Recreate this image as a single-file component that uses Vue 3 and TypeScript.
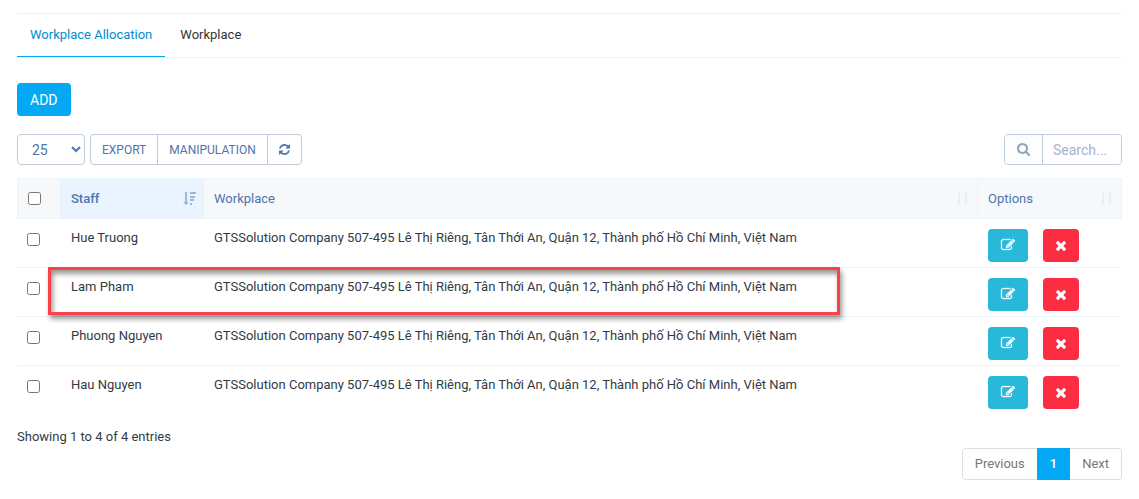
<script setup lang="ts">
import { computed, ref } from 'vue'

interface Allocation {
  id: number
  staff: string
  workplace: string
}

const address =
  'GTSSolution Company 507-495 Lê Thị Riêng, Tân Thới An, Quận 12, Thành phố Hồ Chí Minh, Việt Nam'

const rows = ref<Allocation[]>([
  { id: 1, staff: 'Hue Truong', workplace: address },
  { id: 2, staff: 'Lam Pham', workplace: address },
  { id: 3, staff: 'Phuong Nguyen', workplace: address },
  { id: 4, staff: 'Hau Nguyen', workplace: address },
])

const tabs = ['Workplace Allocation', 'Workplace']
const activeTab = ref(tabs[0])
const pageSize = ref(25)
const search = ref('')
const selected = ref<number[]>([])
const highlightedId = 2

const allSelected = computed({
  get: () => rows.value.length > 0 && selected.value.length === rows.value.length,
  set: (on: boolean) => {
    selected.value = on ? rows.value.map((r) => r.id) : []
  },
})

const visibleRows = computed(() =>
  rows.value.filter((r) => (r.staff + r.workplace).toLowerCase().includes(search.value.toLowerCase())),
)

function removeRow(id: number) {
  rows.value = rows.value.filter((r) => r.id !== id)
}
</script>

<template>
  <main class="page">
    <nav class="tabs">
      <a
        v-for="tab in tabs"
        :key="tab"
        href="#"
        class="tab"
        :class="{ active: tab === activeTab }"
        @click.prevent="activeTab = tab"
      >{{ tab }}</a>
    </nav>

    <button type="button" class="add">ADD</button>

    <div class="toolbar">
      <select v-model="pageSize" class="length" aria-label="Rows per page">
        <option :value="10">10</option>
        <option :value="25">25</option>
        <option :value="50">50</option>
      </select>
      <div class="group">
        <button type="button">EXPORT</button>
        <button type="button">MANIPULATION</button>
        <button type="button" aria-label="Reload">
          <svg class="reload" viewBox="128 128 1536 1536">
            <path d="M1639 1056q0 5-1 7-64 268-268 434.500T892 1664q-146 0-282.500-55T366 1452l-129 129q-19 19-45 19t-45-19-19-45v-448q0-26 19-45t45-19h448q26 0 45 19t19 45-19 45l-137 137q71 66 161 102t187 36q134 0 250-65t186-179q11-17 53-117 8-23 30-23h192q13 0 22.500 9.500t9.500 22.500zM1664 256v448q0 26-19 45t-45 19h-448q-26 0-45-19t-19-45 19-45l138-138Q1097 384 896 384q-134 0-250 65T460 628q-11 17-53 117-8 23-30 23H178q-13 0-22.500-9.500T146 736v-7q65-268 270-434.500T896 128q146 0 284 55.500T1425 340l130-129q19-19 45-19t45 19 19 45z" />
          </svg>
        </button>
      </div>
      <div class="search">
        <label for="search" aria-label="Search">
          <svg viewBox="64 128 1664 1664">
            <path d="M1216 832q0-185-131.500-316.500T768 384 451.500 515.500 320 832t131.500 316.500T768 1280t316.500-131.500T1216 832zm512 832q0 52-38 90t-90 38q-54 0-90-38l-343-342q-179 124-399 124-143 0-273.500-55.500t-225-150-150-225T64 832t55.500-273.500 150-225 225-150T768 128t273.500 55.500 225 150 150 225T1472 832q0 220-124 399l343 343q37 37 37 90z" />
          </svg>
        </label>
        <input id="search" v-model="search" type="text" placeholder="Search..." />
      </div>
    </div>

    <table>
      <colgroup>
        <col class="col-check" />
        <col class="col-staff" />
        <col />
        <col class="col-options" />
      </colgroup>
      <thead>
        <tr>
          <th class="check"><input v-model="allSelected" type="checkbox" aria-label="Select all" /></th>
          <th class="sorted">
            <div class="head">
              Staff
              <svg class="sort" viewBox="0 0 13 13">
                <path d="M2 0h2v10h2L3 13 0 10h2zM7 0h6v2H7zM7 4h5v2H7zM7 7h4v2H7zM7 11h2v2H7z" />
              </svg>
            </div>
          </th>
          <th>
            <div class="head">
              Workplace
              <svg class="sort idle" viewBox="0 0 13 13">
                <path d="M2 0h2v10h2L3 13 0 10h2zM9 13h2V3h2L10 0 7 3h2z" />
              </svg>
            </div>
          </th>
          <th class="options">
            <div class="head">
              Options
              <svg class="sort idle" viewBox="0 0 13 13">
                <path d="M2 0h2v10h2L3 13 0 10h2zM9 13h2V3h2L10 0 7 3h2z" />
              </svg>
            </div>
          </th>
        </tr>
      </thead>
      <tbody>
        <tr v-for="row in visibleRows" :key="row.id">
          <td class="check">
            <input v-model="selected" type="checkbox" :value="row.id" :aria-label="'Select ' + row.staff" />
          </td>
          <td class="staff">
            {{ row.staff }}
            <span v-if="row.id === highlightedId" class="highlight"></span>
          </td>
          <td>{{ row.workplace }}</td>
          <td>
            <div class="actions">
              <button type="button" class="edit" :aria-label="'Edit ' + row.staff">
                <svg viewBox="0 128 1792 1408">
                  <path d="M888 1184l116-116-152-152-116 116v56h96v96h56zm440-720q-16-16-33 1L945 815q-17 17-1 33t33-1l350-350q17-17 1-33zm80 594v190q0 119-84.500 203.500T1120 1536H288q-119 0-203.500-84.500T0 1248V416q0-119 84.500-203.500T288 128h832q63 0 117 25 15 7 18 23 3 17-9 29l-49 49q-14 14-32 8-23-6-45-6H288q-66 0-113 47t-47 113v832q0 66 47 113t113 47h832q66 0 113-47t47-113v-126q0-13 9-22l64-64q15-15 35-7t20 29zm-96-738l288 288-672 672H640V992zm444 132l-92 92-288-288 92-92q28-28 68-28t68 28l152 152q28 28 28 68t-28 68z" />
                </svg>
              </button>
              <button type="button" class="remove" :aria-label="'Delete ' + row.staff" @click="removeRow(row.id)">
                <svg viewBox="302 434 1188 1188">
                  <path d="M1490 1390q0 40-28 68l-136 136q-28 28-68 28t-68-28l-294-294-294 294q-28 28-68 28t-68-28l-136-136q-28-28-28-68t28-68l294-294-294-294q-28-28-28-68t28-68l136-136q28-28 68-28t68 28l294 294 294-294q28-28 68-28t68 28l136 136q28 28 28 68t-28 68l-294 294 294 294q28 28 28 68z" />
                </svg>
              </button>
            </div>
          </td>
        </tr>
      </tbody>
    </table>

    <footer>
      <div class="info">Showing 1 to {{ visibleRows.length }} of {{ rows.length }} entries</div>
      <nav class="pager" aria-label="Pagination">
        <a href="#" @click.prevent>Previous</a>
        <a href="#" class="current" aria-current="page" @click.prevent>1</a>
        <a href="#" @click.prevent>Next</a>
      </nav>
    </footer>
  </main>
</template>

<style>
body {
  background: #fff;
}
</style>

<style scoped>
* {
  box-sizing: border-box;
}
.page {
  padding: 13px 17px 0;
  font: 13px/18px Roboto, "Noto Sans", sans-serif;
  color: #323a45;
}
button,
input,
select {
  font-family: inherit;
}
button {
  cursor: pointer;
}
svg {
  display: block;
  fill: currentColor;
}
.tabs {
  display: flex;
  height: 45px;
  border-top: 1px solid #f0f0f0;
  border-bottom: 1px solid #f0f0f0;
}
.tab {
  padding: 12px 13px;
  color: #333;
  text-decoration: none;
  margin-right: 2px;
}
.tab.active {
  color: #008ece;
  border-bottom: 1px solid #03a9f4;
}
.add {
  display: block;
  height: 33px;
  margin: 25px 0 18px;
  padding: 0 13px;
  border: 0;
  border-radius: 4px;
  background: #03a9f4;
  color: #fff;
  font-size: 14px;
}
.toolbar {
  display: flex;
  height: 31px;
  margin-bottom: 13px;
}
.length {
  width: 68px;
  margin-right: 5px;
  padding: 0 0 0 10px;
  border: 1px solid #bfcbd9;
  border-radius: 4px;
  background: #fff;
  color: #4e75ad;
  font-size: 14px;
}
.group {
  display: flex;
}
.group button {
  padding: 0 11px;
  border: 1px solid #bfcbd9;
  background: #fff;
  color: #4e75ad;
  font-size: 12px;
}
.group button + button {
  margin-left: -1px;
}
.group button:first-child {
  border-radius: 4px 0 0 4px;
}
.group button:last-child {
  border-radius: 0 4px 4px 0;
}
.reload {
  width: 11px;
  height: 11px;
}
.search {
  display: flex;
  margin-left: auto;
  border: 1px solid #bfcbd9;
  border-radius: 4px;
  overflow: hidden;
}
.search label {
  display: flex;
  align-items: center;
  padding: 0 12px;
  background: #fbfdff;
  color: #94a3bd;
  border-right: 1px solid #bfcbd9;
}
.search svg {
  width: 13px;
  height: 13px;
}
.search input {
  width: 78px;
  padding: 0 10px;
  border: 0;
  outline: 0;
  font-size: 14px;
  color: #4e75ad;
}
.search input::placeholder {
  color: #a4b4cb;
}
table {
  width: 100%;
  table-layout: fixed;
  border-collapse: separate;
  border-spacing: 0;
}
.col-check {
  width: 43px;
}
.col-staff {
  width: 144px;
}
.col-options {
  width: 145px;
}
th {
  height: 41px;
  padding: 0 8px 0 10px;
  border-top: 1px solid #ebf5ff;
  border-bottom: 1px solid #ebf5ff;
  background: #f6f8fa;
  color: #4e75ad;
  font-weight: 400;
  text-align: left;
}
th:first-child {
  border-left: 1px solid #ebf5ff;
}
th:last-child {
  border-left: 1px solid #ebf5ff;
  border-right: 1px solid #ebf5ff;
}
th.sorted {
  background: #e9f4ff;
  padding-left: 11px;
  font-weight: 500;
}
.head {
  display: flex;
  align-items: center;
  justify-content: space-between;
}
.sort {
  width: 13px;
  height: 13px;
  color: #9db7d9;
}
th .idle {
  color: #eaeef5;
}
td {
  position: relative;
  padding: 10px 10px 5px;
  vertical-align: top;
}
td.staff {
  padding-left: 11px;
}
td:last-child {
  padding-left: 11px;
}
tbody tr + tr td {
  border-top: 1px solid #ebf5ff;
}
.check input {
  display: block;
  width: 13px;
  height: 13px;
  margin: 0;
}
td.check input {
  margin-top: 4px;
}
.actions {
  display: flex;
  gap: 15px;
}
.actions button {
  display: flex;
  align-items: center;
  justify-content: center;
  height: 33px;
  padding: 0;
  border: 0;
  border-radius: 4px;
  color: #fff;
}
.actions .edit {
  width: 40px;
  padding-bottom: 2px;
  background: #28b8da;
}
.edit svg {
  width: 14px;
  height: 11px;
  stroke: currentColor;
  stroke-width: 40;
  overflow: visible;
}
.actions .remove {
  width: 36px;
  background: #fc2d42;
}
.remove svg {
  width: 10px;
  height: 10px;
}
.highlight {
  position: absolute;
  top: -1px;
  left: -12px;
  width: 792px;
  height: 48px;
  border: 3px solid #fb4146;
  box-shadow: 2px 4px 5px rgba(0, 0, 0, 0.4), inset 2px 4px 5px rgba(0, 0, 0, 0.4);
  pointer-events: none;
  z-index: 1;
}
footer {
  display: flex;
  justify-content: space-between;
  padding-top: 14px;
}
.pager {
  display: flex;
  margin-top: 20px;
  height: 32px;
  border: 1px solid #ddd;
  border-radius: 4px;
}
.pager a {
  padding: 6px 12px;
  color: #777;
  text-decoration: none;
}
.pager .current {
  margin: -1px 0;
  padding: 7px 13px;
  background: #03a9f4;
  color: #fff;
  font-weight: 500;
}
</style>
